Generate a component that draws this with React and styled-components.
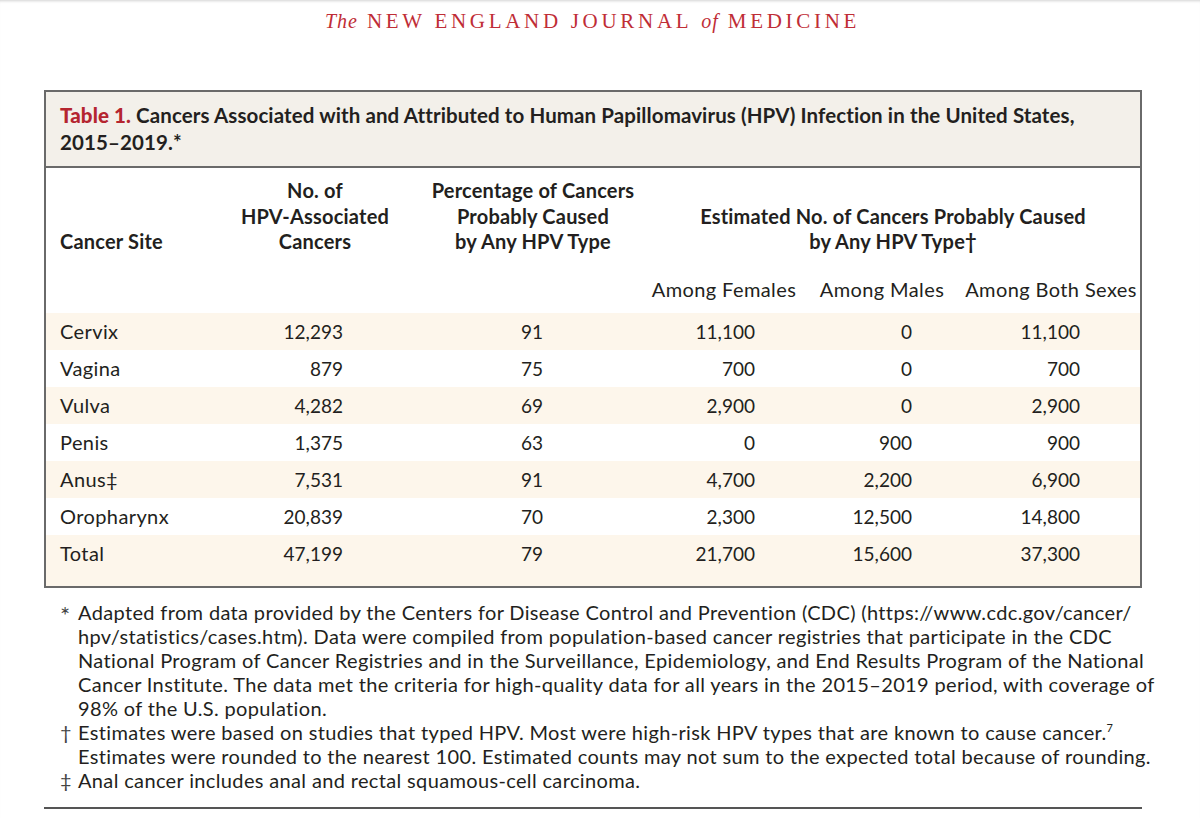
import styled, { createGlobalStyle } from 'styled-components';

const GlobalStyle = createGlobalStyle`
  html, body {
    margin: 0;
    padding: 0;
    background: #ffffff;
  }
  body {
    font-family: Lato, "Open Sans", sans-serif;
    color: #231f20;
  }
`;

const Page = styled.div`
  width: 1200px;
  height: 818px;
  overflow: hidden;
  background: #fff;
  box-shadow: inset 0 3px 3px -2px rgba(0, 0, 0, 0.18);
`;

const Masthead = styled.div`
  height: 42px;
  display: flex;
  justify-content: center;
  align-items: center;
  padding-right: 15px;
  margin-bottom: 48px;
  font-family: "Liberation Serif", "DejaVu Serif", serif;
  color: #bf2d36;
  font-size: 21px;
  letter-spacing: 3.7px;
  white-space: nowrap;

  em {
    font-size: 20px;
    letter-spacing: 1px;
  }
`;

const Box = styled.div`
  margin: 0 58px 0 44px;
  border: 2px solid #6a6a6a;
`;

const TitleBar = styled.div`
  background: #f3f0ea;
  border-bottom: 2px solid #6a6a6a;
  padding: 10px 14px 10px;
  font-weight: 700;
  font-size: 20.5px;
  letter-spacing: 0.1px;
  line-height: 27px;
  color: #231f20;
  white-space: nowrap;

  b {
    color: #b52530;
  }
`;

const Table = styled.table`
  width: 100%;
  border-collapse: collapse;
  table-layout: fixed;
  font-size: 19px;
`;

const HeadCell = styled.th`
  font-weight: ${(p) => (p.$sub ? 400 : 700)};
  font-size: 20px;
  letter-spacing: ${(p) => (p.$sub ? '0.4px' : '0.2px')};
  line-height: 25.5px;
  vertical-align: bottom;
  text-align: ${(p) => p.$align || 'center'};
  padding: ${(p) => p.$pad || '0'};
  white-space: nowrap;
`;

const Row = styled.tr`
  background: ${(p) => (p.$shaded ? '#fdf6eb' : '#ffffff')};
  height: ${(p) => (p.$last ? '51px' : '37px')};
`;

const Cell = styled.td`
  text-align: ${(p) => p.$align || 'right'};
  padding: ${(p) => p.$pad || '0'};
  vertical-align: ${(p) => (p.$top ? 'top' : 'middle')};
  line-height: 37px;
  white-space: nowrap;
`;

const SiteName = styled.span`
  font-size: 20px;
  letter-spacing: 0.4px;
`;

const Notes = styled.div`
  margin: 12px 58px 0 44px;
  padding: 0 0 15px 16px;
  border-bottom: 2px solid #555;
  font-size: 20px;
  letter-spacing: 0.35px;
  line-height: 24px;
  color: #231f20;
`;

const Note = styled.div`
  position: relative;
  padding-left: 18px;
  white-space: nowrap;
`;

const Mark = styled.span`
  position: absolute;
  left: 0;
  top: ${(p) => p.$top || '0'};
  font-size: ${(p) => p.$size || '20px'};
  color: #444;
`;

const Sup = styled.sup`
  font-size: 11px;
  line-height: 0;
`;

const pads = {
  site: '0 0 0 14px',
  no: '0 47px 0 0',
  pct: '0 103px 0 0',
  fem: '0 47px 0 0',
  male: '0 50px 0 0',
  both: '0 60px 0 0',
};

const rows = [
  ['Cervix', '12,293', '91', '11,100', '0', '11,100'],
  ['Vagina', '879', '75', '700', '0', '700'],
  ['Vulva', '4,282', '69', '2,900', '0', '2,900'],
  ['Penis', '1,375', '63', '0', '900', '900'],
  ['Anus‡', '7,531', '91', '4,700', '2,200', '6,900'],
  ['Oropharynx', '20,839', '70', '2,300', '12,500', '14,800'],
  ['Total', '47,199', '79', '21,700', '15,600', '37,300'],
];

export default function App() {
  return (
    <Page>
      <GlobalStyle />
      <Masthead>
        <em>The</em>&nbsp;NEW ENGLAND JOURNAL&nbsp;<em>of</em>&nbsp;MEDICINE
      </Masthead>

      <Box>
        <TitleBar>
          <b>Table 1.</b> Cancers Associated with and Attributed to Human Papillomavirus (HPV) Infection in the United States,
          <br />
          2015–2019.*
        </TitleBar>

        <Table>
          <colgroup>
            <col style={{ width: 194 }} />
            <col style={{ width: 150 }} />
            <col style={{ width: 256 }} />
            <col style={{ width: 156 }} />
            <col style={{ width: 160 }} />
            <col />
          </colgroup>
          <thead>
            <tr>
              <HeadCell $align="left" $pad="10px 0 0 14px">
                Cancer Site
              </HeadCell>
              <HeadCell $pad="10px 0 0 0">
                No. of
                <br />
                HPV-Associated
                <br />
                Cancers
              </HeadCell>
              <HeadCell $pad="10px 0 0 30px">
                Percentage of Cancers
                <br />
                Probably Caused
                <br />
                by Any HPV Type
              </HeadCell>
              <HeadCell colSpan={3} $pad="10px 0 0 0">
                Estimated No. of Cancers Probably Caused
                <br />
                by Any HPV Type†
              </HeadCell>
            </tr>
            <tr>
              <HeadCell colSpan={3} />
              <HeadCell $sub $pad="22px 0 11px 0">Among Females</HeadCell>
              <HeadCell $sub $pad="22px 0 11px 0">Among Males</HeadCell>
              <HeadCell $sub $pad="22px 0 11px 0">Among Both Sexes</HeadCell>
            </tr>
          </thead>
          <tbody>
            {rows.map((r, i) => {
              const last = i === rows.length - 1;
              return (
                <Row key={i} $shaded={i % 2 === 0} $last={last}>
                  <Cell $align="left" $pad={pads.site} $top={last}>
                    <SiteName>{r[0]}</SiteName>
                  </Cell>
                  <Cell $pad={pads.no} $top={last}>{r[1]}</Cell>
                  <Cell $pad={pads.pct} $top={last}>{r[2]}</Cell>
                  <Cell $pad={pads.fem} $top={last}>{r[3]}</Cell>
                  <Cell $pad={pads.male} $top={last}>{r[4]}</Cell>
                  <Cell $pad={pads.both} $top={last}>{r[5]}</Cell>
                </Row>
              );
            })}
          </tbody>
        </Table>
      </Box>

      <Notes>
        <Note>
          <Mark $top="3px" $size="24px">*</Mark>
          Adapted from data provided by the Centers for Disease Control and Prevention (CDC) (https://www.cdc.gov/cancer/
          <br />
          hpv/statistics/cases.htm). Data were compiled from population-based cancer registries that participate in the CDC
          <br />
          National Program of Cancer Registries and in the Surveillance, Epidemiology, and End Results Program of the National
          <br />
          Cancer Institute. The data met the criteria for high-quality data for all years in the 2015–2019 period, with coverage of
          <br />
          98% of the U.S. population.
        </Note>
        <Note>
          <Mark>†</Mark>
          Estimates were based on studies that typed HPV. Most were high-risk HPV types that are known to cause cancer.<Sup>7</Sup>
          <br />
          Estimates were rounded to the nearest 100. Estimated counts may not sum to the expected total because of rounding.
        </Note>
        <Note>
          <Mark>‡</Mark>
          Anal cancer includes anal and rectal squamous-cell carcinoma.
        </Note>
      </Notes>
    </Page>
  );
}
